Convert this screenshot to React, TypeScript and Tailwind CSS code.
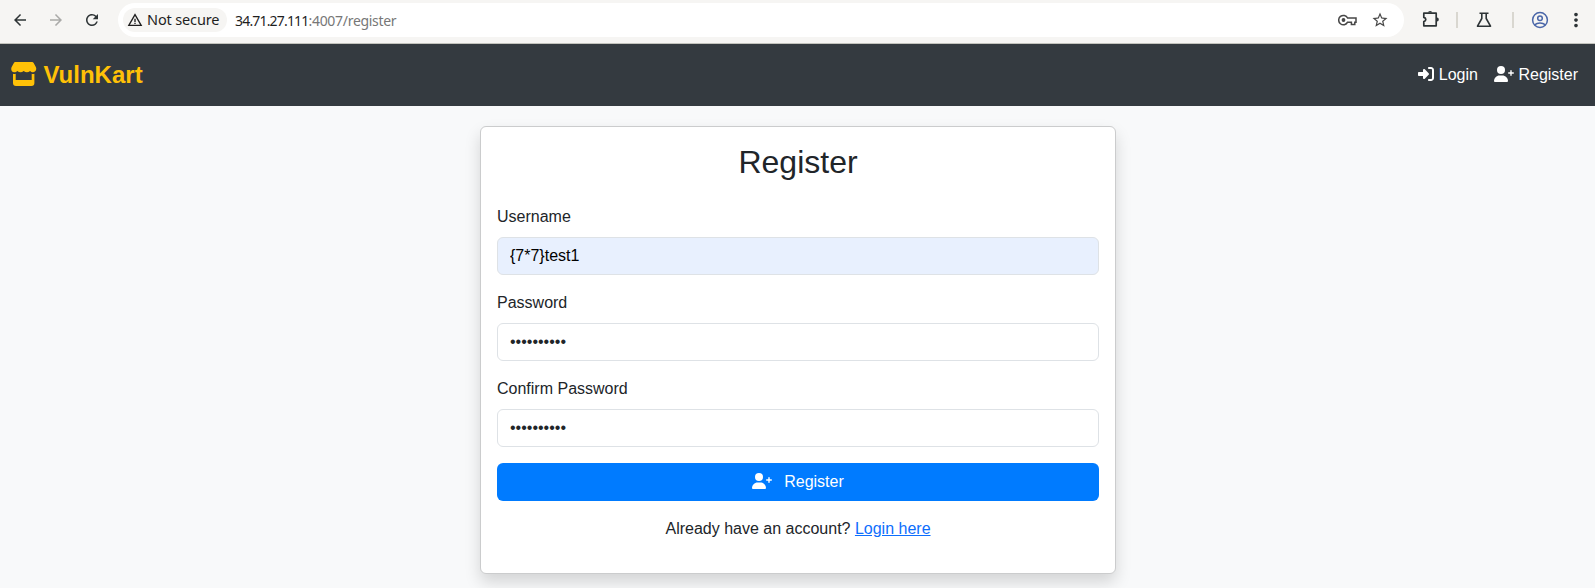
import React from "react";
import { FaRightToBracket } from "react-icons/fa6";
import { MdArrowBack, MdArrowForward, MdRefresh, MdStarBorder, MdWarningAmber, MdMoreVert } from "react-icons/md";

function KeyIcon() {
  return (
    <svg width="19" height="12" viewBox="0 0 19 12" fill="none" stroke="#474747" strokeWidth="1.5">
      <path d="M9.6 4H18v4.2h-1.2v2.2h-3.4V8.200H9.600A4.700 4.700 0 1 1 9.600 4z" />
      <circle cx="5.500" cy="6" r="1.900" fill="#474747" stroke="none" />
    </svg>
  );
}

function PuzzleIcon() {
  return (
    <svg width="18" height="18" viewBox="0 0 18 18" fill="none">
      <path d="M1.800 3.200h12.400v12.600H1.800v-4.200q2-.6 2-2.100t-2-2.100z" stroke="#2e3436" strokeWidth="1.700" strokeLinejoin="round" />
      <path d="M6 2.600a2.100 1.500 0 0 1 4.200 0zM15 7.400a1.800 2.100 0 0 1 0 4.200z" fill="#2e3436" />
    </svg>
  );
}

function FlaskIcon() {
  return (
    <svg width="16" height="16" viewBox="0 0 16 16" fill="none" stroke="#2e3436" strokeWidth="1.600" strokeLinejoin="round">
      <path d="M3.500 1.300h9M5.800 1.300v5.200L1.500 14.200h13L10.200 6.500V1.300" />
    </svg>
  );
}

function ProfileIcon() {
  return (
    <svg width="18" height="18" viewBox="0 0 18 18" fill="none" stroke="#4a66a8" strokeWidth="1.500">
      <circle cx="9" cy="9" r="7.400" />
      <circle cx="9" cy="7.200" r="2.300" />
      <path d="M3.600 13.800c3-2.400 7.800-2.400 10.800 0" />
    </svg>
  );
}

function UserPlusIcon() {
  return (
    <svg className="-mt-0.5" width="20" height="16" viewBox="0 0 20 16" fill="currentColor">
      <circle cx="7" cy="4" r="4" />
      <path d="M0 15.100C0 12 2.500 9.500 5.600 9.500h2.800c3.100 0 5.600 2.500 5.600 5.600 0 .5-.4.900-.9.900H.9c-.5 0-.9-.4-.9-.9z" />
      <path d="M17 4.700v4.600M14.700 7h4.600" stroke="currentColor" strokeWidth="1.400" strokeLinecap="round" />
    </svg>
  );
}

function StoreIcon() {
  return (
    <svg className="-mt-0.5 mr-[6.5px]" width="26" height="24" viewBox="0 0 26 24" fill="currentColor">
      <path d="M4.200 0h17c.5 0 1 .3 1.300.7l2.200 4c1.300 2.400.2 5.300-2.400 5.600-1.300.1-2.400-.4-3.200-1.300a5 5 0 0 1-6.400 0 5 5 0 0 1-6.400 0c-.8.900-1.900 1.400-3.200 1.300C.5 10-.5 7.100.8 4.700l2.200-4C3.200.3 3.700 0 4.200 0z" />
      <path d="M2 11.800q1.300.4 2.700 0V18h16v-6.200q1.400.4 2.700 0V21a3 3 0 0 1-3 3H5a3 3 0 0 1-3-3z" />
    </svg>
  );
}

function BrowserBar() {
  return (
    <div className="flex h-11 items-start border-b border-[#c3c3bd] bg-[#f6f5f3] font-['Noto_Sans',sans-serif] text-[#2e3436]">
      <div className="flex h-10 items-center pl-[11px]">
        <MdArrowBack className="size-[18px]" />
        <MdArrowForward className="ml-[18px] size-[18px] text-[#aaaaa8]" />
        <MdRefresh className="ml-[18px] size-[18px]" />
      </div>
      <div className="mt-[3px] ml-[17px] flex h-[34px] w-[1286px] items-center rounded-full bg-white pr-[15px] pl-[5px]">
        <div className="flex h-6 w-[104px] items-center rounded-full bg-[#f6f5f3] pl-1">
          <MdWarningAmber className="size-4 text-[#1f1f1f]" />
          <span className="ml-1 text-[14.5px] tracking-[-0.14px] whitespace-nowrap text-[#1f1f1f]">Not secure</span>
        </div>
        <div className="ml-2 text-[14px] tracking-[-0.3px] text-[#777]">
          <span className="tracking-[-0.82px] text-[#1f1f1f]">34.71.27.111</span>:4007/register
        </div>
        <div className="ml-auto flex items-center gap-[14px]">
          <KeyIcon />
          <MdStarBorder className="size-[18px] text-[#474747]" />
        </div>
      </div>
      <div className="flex h-10 items-center pl-[18px]">
        <div className="-mt-0.5"><PuzzleIcon /></div>
        <div className="ml-4 h-4 w-0.5 bg-[#d9d7d0]" />
        <div className="ml-[18px]"><FlaskIcon /></div>
        <div className="ml-5 h-4 w-0.5 bg-[#d9d7d0]" />
        <div className="ml-[17px]"><ProfileIcon /></div>
        <MdMoreVert className="ml-4 size-[22px]" />
      </div>
    </div>
  );
}

function Navbar() {
  return (
    <nav className="flex h-[62px] items-center bg-[#343a40] pr-[17px] pl-[11px]">
      <a className="flex items-center text-2xl font-bold text-[#ffc107]" href="#">
        <StoreIcon />
        VulnKart
      </a>
      <div className="ml-auto flex gap-[16.5px] text-white">
        <a className="flex items-center gap-[4.5px]" href="#"><FaRightToBracket className="-mt-0.5 size-4" />Login</a>
        <a className="flex items-center gap-1" href="#"><UserPlusIcon />Register</a>
      </div>
    </nav>
  );
}

function Field({ label, type, value, filled }: { label: string; type: string; value: string; filled?: boolean }) {
  return (
    <div className="mb-4">
      <label className="mb-2 block">{label}</label>
      <input
        type={type}
        defaultValue={value}
        className={
          filled
            ? "block h-[38px] w-full rounded-md border border-[#dee2e6] bg-[#e8f0fe] px-3 text-black"
            : "block h-[38px] w-full rounded-md border border-[#dee2e6] bg-white px-3"
        }
      />
    </div>
  );
}

export default function App() {
  return (
    <div className="flex h-[588px] flex-col overflow-hidden bg-[#f8f9fa] font-['Liberation_Sans',sans-serif] text-base text-[#212529]">
      <BrowserBar />
      <Navbar />
      <div className="flex justify-center pt-5 pl-px">
        <main className="w-[636px] rounded-md border border-[#cbcccd] bg-white p-4 shadow-[0_8px_16px_rgba(0,0,0,0.15)]">
          <h2 className="mb-6 text-center text-[32px] leading-[38.4px] font-medium">Register</h2>
          <Field label="Username" type="text" value="{7*7}test1" filled />
          <Field label="Password" type="password" value="password12" />
          <Field label="Confirm Password" type="password" value="password12" />
          <button className="flex h-[38px] w-full items-center justify-center gap-3 rounded-md bg-[#007bff] text-white">
            <UserPlusIcon />
            Register
          </button>
          <p className="mt-4 mb-4 text-center">
            Already have an account? <a className="text-[#0d6efd] underline" href="#">Login here</a>
          </p>
        </main>
      </div>
    </div>
  );
}
